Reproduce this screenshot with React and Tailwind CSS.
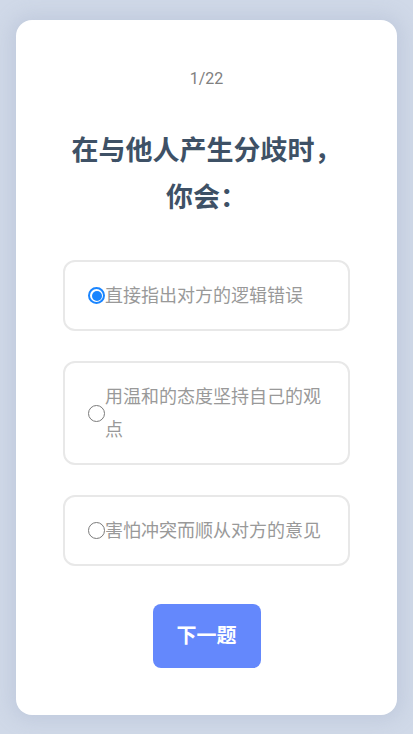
import React, { useState } from "react";

const options = [
  "直接指出对方的逻辑错误",
  "用温和的态度坚持自己的观点",
  "害怕冲突而顺从对方的意见",
];

const Radio = ({ checked }) =>
  checked ? (
    <span className="w-[17px] h-[17px] shrink-0 rounded-full border-2 border-[#1a85ff] bg-white flex items-center justify-center">
      <span className="w-[10px] h-[10px] rounded-full bg-[#1a85ff]" />
    </span>
  ) : (
    <span className="w-[17px] h-[17px] shrink-0 rounded-full border border-[#7a7a7a] bg-white" />
  );

const App = () => {
  const [selected, setSelected] = useState(0);

  return (
    <div
      className="min-h-screen bg-[#d0d9e8] px-4 py-5"
      style={{ fontFamily: 'Roboto, "Noto Sans CJK SC", sans-serif' }}
    >
      <div className="bg-white rounded-[16px] shadow-[0_0_18px_6px_rgba(150,165,190,0.25)] px-[47px] pt-[48px] pb-[47px] flex flex-col items-center">
        <div className="text-[16px] leading-[22px] text-[#808080]">1/22</div>

        <h1 className="mt-[38px] w-[280px] text-center text-[27px] leading-[47px] font-bold text-[#3e5166]">
          在与他人产生分歧时，你会：
        </h1>

        <div className="mt-[38px] w-full flex flex-col gap-[30px]">
          {options.map((opt, i) => (
            <div
              key={i}
              onClick={() => setSelected(i)}
              className="border-2 border-[#e8e8e8] rounded-[12px] pl-[23px] pr-[22px] py-[17px] flex items-center cursor-pointer"
            >
              <Radio checked={selected === i} />
              <span className="text-[18px] leading-[33px] text-[#999999]">{opt}</span>
            </div>
          ))}
        </div>

        <button className="mt-[38px] bg-[#6488fc] text-white text-[20px] leading-[28px] font-bold px-[24px] py-[18px] rounded-[8px]">
          下一题
        </button>
      </div>
    </div>
  );
};

export default App;
